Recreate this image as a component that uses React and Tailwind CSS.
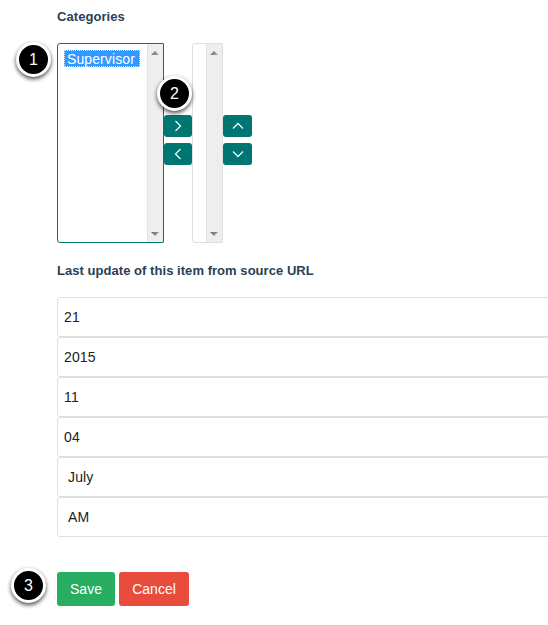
const FONT = "font-['Liberation_Sans',Arial,sans-serif]";

const rows = [
  { value: "21", pad: "pl-[6px]" },
  { value: "2015", pad: "pl-[6px]" },
  { value: "11", pad: "pl-[6px]" },
  { value: "04", pad: "pl-[6px]" },
  { value: "July", pad: "pl-[10px]" },
  { value: "AM", pad: "pl-[10px]" },
];

function ScrollArrow({ up }) {
  return (
    <svg className="block" width="8" height="4" viewBox="0 0 8 4">
      <defs>
        <linearGradient id={up ? "arrow-up" : "arrow-down"} x1="0" x2="1" y1="0" y2="0.5">
          <stop offset="0" stopColor="#666666" />
          <stop offset="1" stopColor="#a0a0a0" />
        </linearGradient>
      </defs>
      <path d={up ? "M4 0L8 4H0Z" : "M0 0H8L4 4Z"} fill={up ? "url(#arrow-up)" : "url(#arrow-down)"} />
    </svg>
  );
}

function Scrollbar() {
  return (
    <div className="flex h-full w-4 shrink-0 flex-col items-center justify-between border-l border-[#e3e3e3] bg-[#eeeeee] pt-[7px] pr-[2px] pb-[6px]">
      <ScrollArrow up />
      <ScrollArrow />
    </div>
  );
}

function MoveButton({ points, width }) {
  return (
    <button className={`flex h-[22px] items-center justify-center rounded-[3px] bg-[#007672] ${width}`}>
      <svg width="12" height="12" viewBox="0 0 12 12" fill="none" stroke="#f0f7f6" strokeWidth="1.25">
        <polyline points={points} />
      </svg>
    </button>
  );
}

function Badge({ number, place }) {
  return (
    <div
      className={`absolute flex size-[35px] items-center justify-center rounded-full border-[3px] border-white bg-black text-[16px] leading-none text-white shadow-[0_2px_4px_rgba(0,0,0,0.7)] ${place}`}
    >
      {number}
    </div>
  );
}

export default function App() {
  return (
    <main className={`relative h-[625px] w-full overflow-hidden bg-white pl-[57px] pt-2 text-[14px] text-[#222] ${FONT}`}>
      <h2 className="h-[35px] text-[13px] font-bold leading-[17px] tracking-[0.06px] text-[#2a3f54]">Categories</h2>

      <div className="flex h-[200px]">
        <div className="flex w-[107px] justify-between rounded-l-[3px] rounded-r-[1px] border border-[#007672]">
          <div className="mt-[6px] ml-[6px] h-[17px] w-[76px] border border-dotted border-[#cce6ff] bg-[#3399ff] pl-[2px] leading-[16px] tracking-[0.1px] text-white">
            Supervisor
          </div>
          <Scrollbar />
        </div>
        <div className="flex flex-col gap-[6px] pt-[72px]">
          <MoveButton width="w-[28px]" points="3.5,1 8.5,6 3.5,11" />
          <MoveButton width="w-[28px]" points="8.5,1 3.5,6 8.5,11" />
        </div>
        <div className="flex w-[31px] justify-end rounded-l-[3px] rounded-r-[1px] border border-[#dfdfe3]">
          <Scrollbar />
        </div>
        <div className="flex flex-col gap-[6px] pt-[72px]">
          <MoveButton width="w-[29px]" points="1,8.5 6,3.5 11,8.5" />
          <MoveButton width="w-[29px]" points="1,3.5 6,8.5 11,3.5" />
        </div>
      </div>

      <h2 className="mt-[19px] h-[35px] whitespace-nowrap text-[13px] font-bold leading-[17px] tracking-[0.045px] text-[#2a3f54]">
        Last update of this item from source URL
      </h2>

      <div className="-mr-2">
        {rows.map((row) => (
          <div key={row.value} className={`flex h-10 items-center rounded-[3px] border border-[#dfdfe3] tracking-[0.15px] ${row.pad}`}>
            {row.value}
          </div>
        ))}
      </div>

      <div className="mt-[35px] flex gap-1 text-white">
        <button className="h-[34px] w-[58px] rounded-[3px] bg-[#27ae60]">Save</button>
        <button className="h-[34px] w-[70px] rounded-[3px] bg-[#e74c3c]">Cancel</button>
      </div>

      <Badge number="1" place="left-[16px] top-[42px]" />
      <Badge number="2" place="left-[157px] top-[76px]" />
      <Badge number="3" place="left-[11px] top-[568px]" />
    </main>
  );
}
